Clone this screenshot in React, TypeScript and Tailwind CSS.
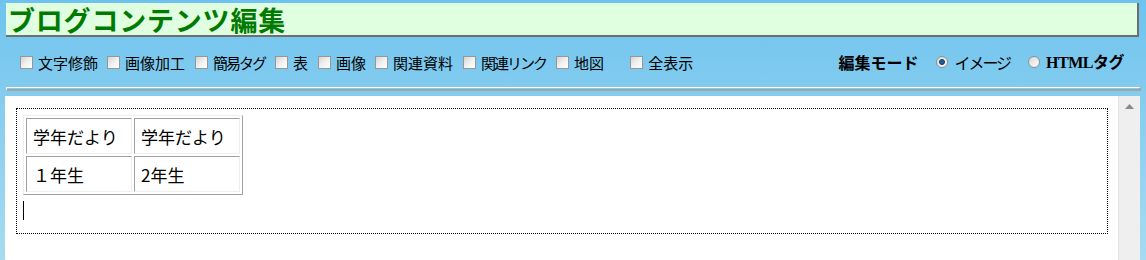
import React from 'react'

const jp = "font-['Noto_Sans_CJK_JP','Noto_Sans',sans-serif]"

function Box() {
  return (
    <span className="inline-block w-[13px] h-[13px] border border-[#979797] bg-gradient-to-br from-[#d4d4d4] via-[#f0f0f0] to-white shrink-0" />
  )
}

function Radio({ on }: { on?: boolean }) {
  return (
    <span className="inline-flex items-center justify-center w-[12px] h-[12px] rounded-full border border-[#8e8e8e] bg-gradient-to-br from-[#d8d8d8] to-white shrink-0">
      {on && <span className="w-[6px] h-[6px] rounded-full bg-[#1f5f93] border border-[#0d3a63]" />}
    </span>
  )
}

const opts = [
  { label: '文字修飾', mr: 'mr-[9px]', ls: '' },
  { label: '画像加工', mr: 'mr-[10px]', ls: '' },
  { label: '簡易タグ', mr: 'mr-[10px]', ls: 'tracking-[-2px]' },
  { label: '表', mr: 'mr-[10px]', ls: '' },
  { label: '画像', mr: 'mr-[9px]', ls: '' },
  { label: '関連資料', mr: 'mr-[10px]', ls: '' },
  { label: '関連リンク', mr: 'mr-[10px]', ls: 'tracking-[-2px]' },
  { label: '地図', mr: 'mr-[26px]', ls: '' },
  { label: '全表示', mr: 'mr-0', ls: '' },
]

export default function App() {
  return (
    <div className={`w-[1146px] h-[260px] overflow-hidden bg-gradient-to-b from-[#6ec3ee] to-[#a6dbf1] ${jp}`}>
      {/* title */}
      <div className="pt-[3px] pl-[6px] pr-[7px]">
        <div className="h-[34px] bg-[#e0ffe0] border-r-2 border-b-2 border-[#6e6e6e] flex items-center pl-[2px]">
          <h1 className="text-[27px] font-bold text-[#007a00] leading-none tracking-[0.8px]">ブログコンテンツ編集</h1>
        </div>
      </div>

      {/* options row */}
      <div className="h-[50px] flex items-center pl-[20px] pr-[22px] text-[15px] text-black">
        <div className="flex items-center">
          {opts.map(o => (
            <label key={o.label} className={`flex items-center ${o.mr}`}>
              <Box />
              <span className={`ml-[5px] leading-none ${o.ls}`}>{o.label}</span>
            </label>
          ))}
        </div>
        <div className="ml-auto flex items-center">
          <span className="font-bold text-[16px] mr-[18px]">編集モード</span>
          <Radio on />
          <span className="ml-[6px] mr-[18px] text-[16px] tracking-[-2px]">イメージ</span>
          <Radio />
          <span className="ml-[6px] text-[16px] font-bold tracking-[-0.5px]">
            <span className="font-['Liberation_Serif',serif] text-[16px]">HTML</span>タグ
          </span>
        </div>
      </div>

      {/* divider */}
      <div className="ml-[6px] mr-[5px] h-[4px] border-t border-l border-white border-b-2 border-r-2 border-b-[#a3a3a3] border-r-[#a3a3a3]" />

      {/* editor */}
      <div className="mt-[5px] ml-[5px] mr-[6px] h-[170px] bg-white flex">
        <div className="flex-1 pt-[12px] pl-[11px] pr-[10px]">
          <div className="h-[126px] border border-dotted border-black pt-[6px] pl-[6px]">
            <table className="border border-t-[#efefef] border-l-[#efefef] border-b-[#a0a0a0] border-r-[#a0a0a0] border-separate border-spacing-[2px] text-[17px] leading-none">
              <tbody>
                <tr>
                  <td className="w-[106px] h-[36px] border border-t-[#a0a0a0] border-l-[#a0a0a0] border-b-[#efefef] border-r-[#efefef] pl-[6px]">学年だより</td>
                  <td className="w-[106px] h-[36px] border border-t-[#a0a0a0] border-l-[#a0a0a0] border-b-[#efefef] border-r-[#efefef] pl-[6px]">学年だより</td>
                </tr>
                <tr>
                  <td className="h-[36px] border border-t-[#a0a0a0] border-l-[#a0a0a0] border-b-[#efefef] border-r-[#efefef] pl-[6px]">１年生</td>
                  <td className="h-[36px] border border-t-[#a0a0a0] border-l-[#a0a0a0] border-b-[#efefef] border-r-[#efefef] pl-[6px]">2年生</td>
                </tr>
              </tbody>
            </table>
            <div className="mt-[6px] w-px h-[19px] bg-black" />
          </div>
        </div>
        <div className="w-[22px] bg-[#efefef] border-l border-[#e2e2e2] flex justify-center pt-[8px]">
          <svg width="9" height="5" viewBox="0 0 9 5"><path d="M4.5 0 L9 5 L0 5 Z" fill="#8a8a8a" /></svg>
        </div>
      </div>
    </div>
  )
}
